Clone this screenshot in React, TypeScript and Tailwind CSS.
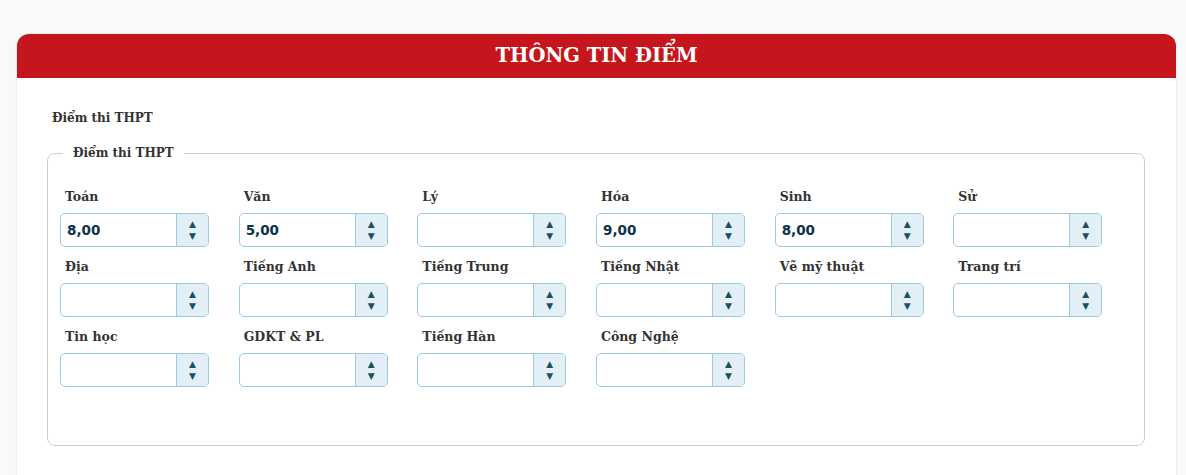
import React from 'react';

type Field = { label: string; value?: string };

const fields: Field[] = [
  { label: 'Toán', value: '8,00' },
  { label: 'Văn', value: '5,00' },
  { label: 'Lý' },
  { label: 'Hóa', value: '9,00' },
  { label: 'Sinh', value: '8,00' },
  { label: 'Sử' },
  { label: 'Địa' },
  { label: 'Tiếng Anh' },
  { label: 'Tiếng Trung' },
  { label: 'Tiếng Nhật' },
  { label: 'Vẽ mỹ thuật' },
  { label: 'Trang trí' },
  { label: 'Tin học' },
  { label: 'GDKT & PL' },
  { label: 'Tiếng Hàn' },
  { label: 'Công Nghệ' },
];

const serif = "font-['DejaVu_Serif','Liberation_Serif',serif]";

function NumberBox({ value }: { value?: string }) {
  return (
    <div className="flex h-[34px] w-[149px] rounded-[5px] border border-[#9ccade] bg-white overflow-hidden">
      <div className="flex-1 flex items-center pl-[6px] font-['DejaVu_Sans',sans-serif] text-[13.5px] font-bold text-[#0d3347]">
        {value}
      </div>
      <div className="w-[32px] flex flex-col items-center justify-center gap-[3px] border-l border-[#9ccade] bg-[#e3eff6] text-[#1d4f63] text-[9px] leading-none">
        <span>▲</span>
        <span>▼</span>
      </div>
    </div>
  );
}

export default function App() {
  return (
    <div className={`min-h-[475px] bg-[#f8f9fb] pt-[34px] pl-[17px] pr-[10px] ${serif}`}>
      <div className="rounded-t-[12px] bg-white shadow-[0_0_2px_rgba(0,0,0,0.18)] overflow-hidden h-[460px]">
        {/* Header */}
        <div className="h-[44px] bg-[#c4161c] flex items-center justify-center">
          <h1 className="text-white text-[19.5px] font-bold">THÔNG TIN ĐIỂM</h1>
        </div>

        <div className="pl-[30px] pr-[30px]">
          <p className="mt-[31px] ml-[5px] text-[12px] font-bold text-[#333]">Điểm thi THPT</p>

          <fieldset className="mt-[17px] h-[302px] w-[1098px] rounded-[8px] border border-[#c8cdd6] px-[12px]">
            <legend className="ml-[3px] px-[10px] text-[12px] font-bold text-[#333]">Điểm thi THPT</legend>
            <div className="grid grid-cols-6 gap-y-[11px] mt-[26px]">
              {fields.map((f) => (
                <div key={f.label} className="flex flex-col">
                  <label className="ml-[5px] mb-[8px] text-[12.5px] font-bold text-[#333] leading-[17px]">
                    {f.label}
                  </label>
                  <NumberBox value={f.value} />
                </div>
              ))}
            </div>
          </fieldset>
        </div>
      </div>
    </div>
  );
}
